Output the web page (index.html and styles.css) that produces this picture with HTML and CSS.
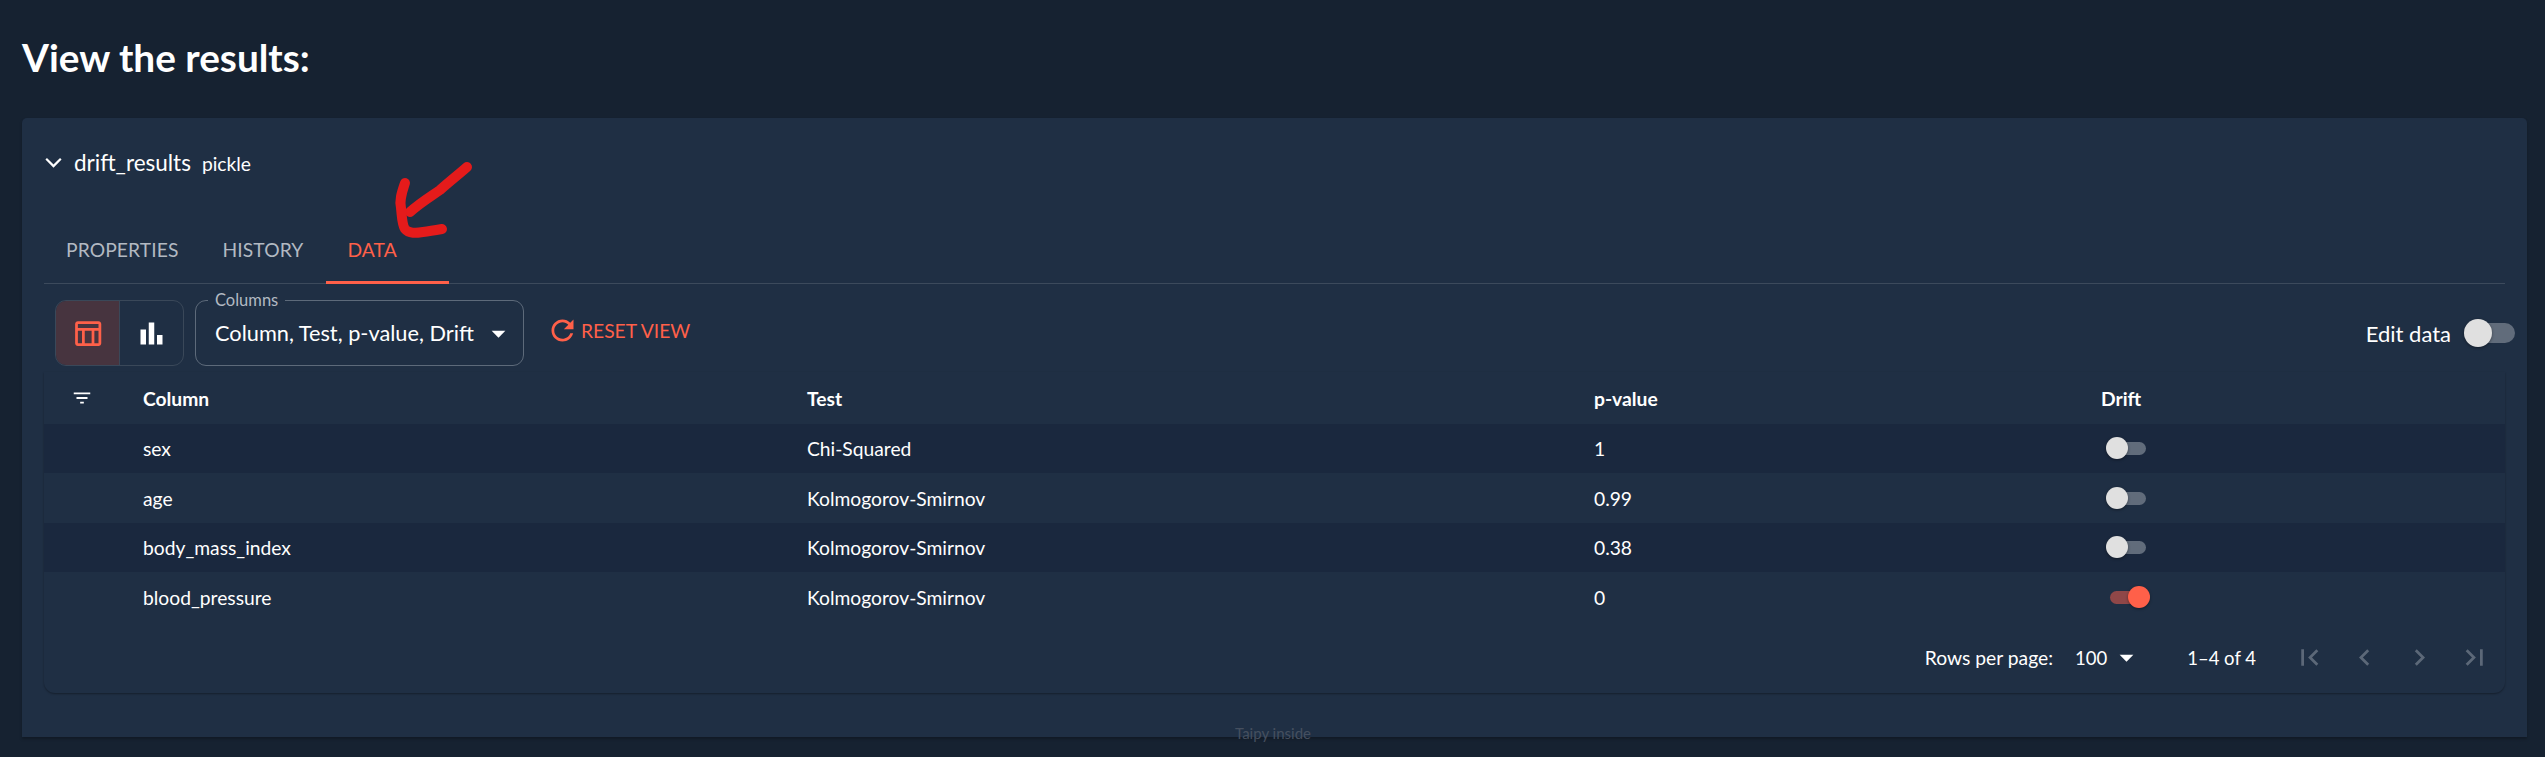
FILE: index.html
```html
<!DOCTYPE html>
<html lang="en">

<head>
    <meta charset="UTF-8">
    <meta name="viewport" content="width=device-width, initial-scale=1.0">
    <title>View the results</title>
    <link rel="stylesheet" href="styles.css">
</head>

<body>
    <main class="page">
        <h1 class="page-title">View the results:</h1>

        <section class="card">
            <div class="expander-head">
                <svg class="icon icon-chevron" viewBox="0 0 24 24"><path d="M6.7 9.3 12 14.6l5.3-5.3" /></svg>
                <span class="expander-name">drift_results</span>
                <span class="expander-type">pickle</span>
            </div>

            <div class="tabs">
                <div class="tab">PROPERTIES</div>
                <div class="tab">HISTORY</div>
                <div class="tab tab-active">DATA</div>
            </div>

            <div class="toolbar">
                <div class="view-toggle">
                    <button class="view-btn view-btn-active">
                        <svg class="icon" viewBox="0 0 24 24"><path d="M20 3H5c-1.1 0-2 .9-2 2v14c0 1.1.9 2 2 2h15c1.1 0 2-.9 2-2V5c0-1.1-.9-2-2-2zm0 2v3H5V5h15zm-5 14h-5v-9h5v9zM5 10h3v9H5v-9zm12 9v-9h3v9h-3z" /></svg>
                    </button>
                    <button class="view-btn">
                        <svg class="icon" viewBox="0 0 24 24"><path d="M4 9h4v11H4zm12 4h4v7h-4zm-6-9h4v16h-4z" /></svg>
                    </button>
                </div>

                <div class="select">
                    <span class="select-label">Columns</span>
                    <span class="select-value">Column, Test, p-value, Drift</span>
                    <svg class="icon select-arrow" viewBox="0 0 24 24"><path d="M7 10l5 5 5-5z" /></svg>
                </div>

                <button class="reset-btn">
                    <svg class="icon" viewBox="0 0 24 24"><path d="M17.65 6.35C16.2 4.9 14.21 4 12 4c-4.42 0-7.99 3.58-7.99 8s3.57 8 7.99 8c3.73 0 6.84-2.55 7.73-6h-2.08c-.82 2.33-3.04 4-5.65 4-3.31 0-6-2.69-6-6s2.69-6 6-6c1.66 0 3.14.69 4.22 1.78L13 11h7V4l-2.35 2.35z" /></svg>
                    <span>RESET VIEW</span>
                </button>

                <div class="edit-data">
                    <span>Edit data</span>
                    <span class="switch"><span class="switch-thumb"></span></span>
                </div>
            </div>

            <div class="table-panel">
                <table class="data-table">
                    <thead>
                        <tr>
                            <th class="col-filter">
                                <svg class="icon icon-small" viewBox="0 0 24 24"><path d="M10 18h4v-2h-4v2zM3 6v2h18V6H3zm3 7h12v-2H6v2z" /></svg>
                            </th>
                            <th class="col-name">Column</th>
                            <th class="col-test">Test</th>
                            <th class="col-pvalue">p-value</th>
                            <th>Drift</th>
                        </tr>
                    </thead>
                    <tbody>
                        <tr>
                            <td></td>
                            <td>sex</td>
                            <td>Chi-Squared</td>
                            <td>1</td>
                            <td><span class="switch switch-small"><span class="switch-thumb"></span></span></td>
                        </tr>
                        <tr>
                            <td></td>
                            <td>age</td>
                            <td>Kolmogorov-Smirnov</td>
                            <td>0.99</td>
                            <td><span class="switch switch-small"><span class="switch-thumb"></span></span></td>
                        </tr>
                        <tr>
                            <td></td>
                            <td>body_mass_index</td>
                            <td>Kolmogorov-Smirnov</td>
                            <td>0.38</td>
                            <td><span class="switch switch-small"><span class="switch-thumb"></span></span></td>
                        </tr>
                        <tr>
                            <td></td>
                            <td>blood_pressure</td>
                            <td>Kolmogorov-Smirnov</td>
                            <td>0</td>
                            <td><span class="switch switch-small switch-on"><span class="switch-thumb"></span></span></td>
                        </tr>
                    </tbody>
                </table>

                <div class="pagination">
                    <span class="rows-label">Rows per page:</span>
                    <span class="rows-select">
                        100
                        <svg class="icon rows-arrow" viewBox="0 0 24 24"><path d="M7 10l5 5 5-5z" /></svg>
                    </span>
                    <span class="page-range">1–4 of 4</span>
                    <span class="page-buttons">
                        <svg class="icon" viewBox="0 0 24 24"><path d="M18.41 16.59L13.82 12l4.59-4.59L17 6l-6 6 6 6zM6 6h2v12H6z" /></svg>
                        <svg class="icon" viewBox="0 0 24 24"><path d="M15.41 7.41L14 6l-6 6 6 6 1.41-1.41L10.83 12z" /></svg>
                        <svg class="icon" viewBox="0 0 24 24"><path d="M10 6L8.59 7.41 13.17 12l-4.58 4.59L10 18l6-6z" /></svg>
                        <svg class="icon" viewBox="0 0 24 24"><path d="M5.59 7.41L10.18 12l-4.59 4.59L7 18l6-6-6-6zM16 6h2v12h-2z" /></svg>
                    </span>
                </div>
            </div>
        </section>

        <div class="taipy-inside">Taipy inside</div>

        <!-- hand drawn arrow on top of the screenshot -->
        <svg class="red-arrow" viewBox="0 0 90 90">
            <path d="M69 5 C60 13 52 19 42 28 C32 35 22 41 12 50" />
            <path d="M7 21 C4 30 1 38 3 46 C4 55 4 63 7 67 C11 72 18 71 25 70 C32 69 38 68 44 67" />
        </svg>
    </main>
</body>

</html>
```

FILE: styles.css
```css
* {
    box-sizing: border-box;
}

body {
    margin: 0;
    background-color: #162231;
    color: #ffffff;
    font-family: Lato, "Liberation Sans", sans-serif;
    font-size: 19.25px;
}

.page {
    position: relative;
    height: 757px;
    padding: 0 18px 0 22px;
    overflow: hidden;
}

.page-title {
    margin: 0;
    height: 118px;
    padding-top: 35px;
    font-size: 38.75px;
    font-weight: 700;
    line-height: 44px;
}

.icon {
    display: block;
    width: 33px;
    height: 33px;
    fill: currentColor;
    flex-shrink: 0;
}

.icon-small {
    width: 22px;
    height: 22px;
}

.icon-chevron {
    fill: none;
    stroke: currentColor;
    stroke-width: 1.6;
}

.card {
    height: 619px;
    padding: 0 22px;
    background-color: #1f2f44;
    border-radius: 5px 5px 0 0;
    box-shadow: 0 2px 3px rgba(0, 0, 0, 0.25);
}

.expander-head {
    display: flex;
    align-items: center;
    height: 88px;
    margin-bottom: 11px;
    color: #ffffff;
}

.expander-head .icon {
    margin-left: -7px;
}

.expander-name {
    margin-left: 4px;
    font-size: 22.5px;
}

.expander-type {
    margin-left: 11px;
    margin-top: 2px;
    font-size: 19.25px;
}

.tabs {
    display: flex;
    height: 67px;
    border-bottom: 1px solid #3c4a5c;
}

.tab {
    height: 67px;
    padding: 0 22px;
    line-height: 66px;
    color: #b2b9c2;
    letter-spacing: 0.1px;
}

.tab-active {
    width: 123px;
    margin-left: 1px;
    padding-left: 21px;
    color: #ff6049;
    border-bottom: 3px solid #ff6049;
}

.toolbar {
    display: flex;
    align-items: center;
    height: 66px;
    margin: 16px -10px 6px 11px;
}

.view-toggle {
    display: flex;
    width: 129px;
    height: 66px;
    border: 1px solid #3a4859;
    border-radius: 11px;
    overflow: hidden;
}

.view-btn {
    display: flex;
    align-items: center;
    justify-content: center;
    flex: 1;
    padding: 0;
    border: 0;
    background: none;
    color: #ffffff;
}

.view-btn-active {
    color: #ff6049;
    background-color: #47343f;
    border-right: 1px solid #3a4859;
}

.select {
    position: relative;
    display: flex;
    align-items: center;
    justify-content: space-between;
    width: 329px;
    height: 66px;
    margin-left: 11px;
    padding: 0 9px 0 19px;
    border: 1px solid #5d6a7a;
    border-radius: 11px;
}

.select-label {
    position: absolute;
    top: -11px;
    left: 12px;
    padding: 0 7px;
    background-color: #1f2f44;
    color: #b2b9c2;
    font-size: 16.5px;
    line-height: 20px;
}

.select-value {
    font-size: 21.75px;
}

.select-arrow {
    margin-right: -1px;
}

.reset-btn {
    display: flex;
    align-items: center;
    margin: -6px 0 0 22px;
    padding: 0;
    border: 0;
    background: none;
    color: #ff6049;
    font-family: inherit;
    font-size: 19.25px;
}

.reset-btn .icon {
    margin-right: 2px;
}

.edit-data {
    display: flex;
    align-items: center;
    margin-left: auto;
    font-size: 22px;
}

.switch {
    position: relative;
    display: block;
    width: 47px;
    height: 20px;
    margin-left: 17px;
    border-radius: 10px;
    background-color: #616c7b;
}

.switch-thumb {
    position: absolute;
    top: -4px;
    left: -4px;
    width: 28px;
    height: 28px;
    border-radius: 50%;
    background-color: #e0e0e0;
    box-shadow: 0 1px 3px rgba(0, 0, 0, 0.4);
}

.switch-small {
    width: 36px;
    height: 13px;
    margin-left: 9px;
    border-radius: 7px;
}

.switch-small .switch-thumb {
    top: -5px;
    left: -4px;
    width: 22px;
    height: 22px;
}

.switch-on {
    background-color: #8f4748;
}

.switch-on .switch-thumb {
    left: 18px;
    background-color: #ff6049;
}

.table-panel {
    height: 321px;
    border-radius: 0 0 11px 11px;
    box-shadow: 0 1px 2px rgba(0, 0, 0, 0.35);
}

.data-table {
    width: 100%;
    table-layout: fixed;
    border-collapse: collapse;
}

.data-table th,
.data-table td {
    padding: 0 22px;
    text-align: left;
}

.data-table th {
    height: 52px;
    font-weight: 700;
}

.data-table td {
    height: 49px;
}

.data-table tbody tr:nth-child(even) td {
    height: 50px;
}

.data-table tbody tr:nth-child(odd) {
    background-color: #1a283e;
}

.col-filter {
    width: 77px;
}

.data-table .col-filter {
    padding: 0 0 0 27px;
}

.col-name {
    width: 664px;
}

.col-test {
    width: 787px;
}

.col-pvalue {
    width: 507px;
}

.pagination {
    display: flex;
    align-items: center;
    justify-content: flex-end;
    height: 71px;
    padding-right: 14px;
}

.rows-select {
    display: flex;
    align-items: center;
    margin-left: 22px;
    font-size: 18.5px;
}

.rows-arrow {
    margin-left: 3px;
}

.page-range {
    margin-left: 44px;
    font-size: 18.5px;
}

.page-buttons {
    display: flex;
    gap: 22px;
    margin-left: 37px;
    color: #5c6878;
}

.taipy-inside {
    position: absolute;
    top: 724px;
    left: 1235px;
    color: #454f5f;
    font-size: 15px;
    line-height: 18px;
}

.red-arrow {
    position: absolute;
    top: 162px;
    left: 398px;
    width: 90px;
    height: 90px;
    overflow: visible;
}

.red-arrow path {
    fill: none;
    stroke: #e51b1b;
    stroke-width: 10;
    stroke-linecap: round;
    stroke-linejoin: round;
}
```
